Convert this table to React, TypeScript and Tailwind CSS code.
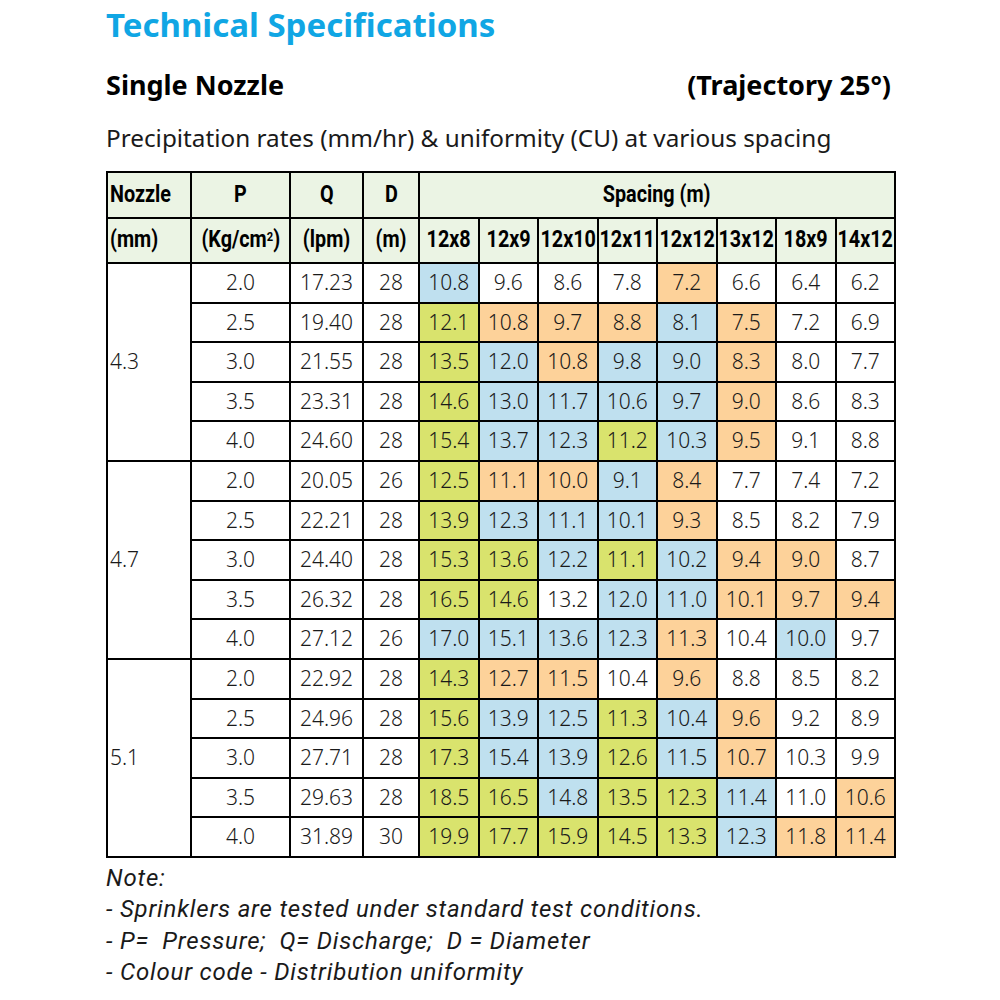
const B = "bg-[#bfe0ef]";
const G = "bg-[#d9e36d]";
const O = "bg-[#fdd29a]";
const W = "bg-white";

type Row = { p: string; q: string; d: string; v: [string, string][] };

const spacings = ["12x8", "12x9", "12x10", "12x11", "12x12", "13x12", "18x9", "14x12"];

const groups: { nozzle: string; rows: Row[] }[] = [
  {
    nozzle: "4.3",
    rows: [
      { p: "2.0", q: "17.23", d: "28", v: [["10.8", B], ["9.6", W], ["8.6", W], ["7.8", W], ["7.2", O], ["6.6", W], ["6.4", W], ["6.2", W]] },
      { p: "2.5", q: "19.40", d: "28", v: [["12.1", G], ["10.8", O], ["9.7", O], ["8.8", O], ["8.1", B], ["7.5", O], ["7.2", W], ["6.9", W]] },
      { p: "3.0", q: "21.55", d: "28", v: [["13.5", G], ["12.0", B], ["10.8", O], ["9.8", B], ["9.0", B], ["8.3", O], ["8.0", W], ["7.7", W]] },
      { p: "3.5", q: "23.31", d: "28", v: [["14.6", G], ["13.0", B], ["11.7", B], ["10.6", B], ["9.7", B], ["9.0", O], ["8.6", W], ["8.3", W]] },
      { p: "4.0", q: "24.60", d: "28", v: [["15.4", G], ["13.7", B], ["12.3", B], ["11.2", G], ["10.3", B], ["9.5", O], ["9.1", W], ["8.8", W]] },
    ],
  },
  {
    nozzle: "4.7",
    rows: [
      { p: "2.0", q: "20.05", d: "26", v: [["12.5", G], ["11.1", O], ["10.0", O], ["9.1", B], ["8.4", O], ["7.7", W], ["7.4", W], ["7.2", W]] },
      { p: "2.5", q: "22.21", d: "28", v: [["13.9", G], ["12.3", B], ["11.1", B], ["10.1", B], ["9.3", O], ["8.5", W], ["8.2", W], ["7.9", W]] },
      { p: "3.0", q: "24.40", d: "28", v: [["15.3", G], ["13.6", G], ["12.2", B], ["11.1", G], ["10.2", B], ["9.4", O], ["9.0", O], ["8.7", W]] },
      { p: "3.5", q: "26.32", d: "28", v: [["16.5", G], ["14.6", G], ["13.2", W], ["12.0", B], ["11.0", B], ["10.1", O], ["9.7", O], ["9.4", O]] },
      { p: "4.0", q: "27.12", d: "26", v: [["17.0", B], ["15.1", B], ["13.6", B], ["12.3", B], ["11.3", O], ["10.4", W], ["10.0", B], ["9.7", W]] },
    ],
  },
  {
    nozzle: "5.1",
    rows: [
      { p: "2.0", q: "22.92", d: "28", v: [["14.3", G], ["12.7", O], ["11.5", O], ["10.4", W], ["9.6", O], ["8.8", W], ["8.5", W], ["8.2", W]] },
      { p: "2.5", q: "24.96", d: "28", v: [["15.6", G], ["13.9", B], ["12.5", B], ["11.3", G], ["10.4", B], ["9.6", O], ["9.2", W], ["8.9", W]] },
      { p: "3.0", q: "27.71", d: "28", v: [["17.3", G], ["15.4", B], ["13.9", B], ["12.6", G], ["11.5", B], ["10.7", O], ["10.3", W], ["9.9", W]] },
      { p: "3.5", q: "29.63", d: "28", v: [["18.5", G], ["16.5", G], ["14.8", B], ["13.5", G], ["12.3", G], ["11.4", B], ["11.0", W], ["10.6", O]] },
      { p: "4.0", q: "31.89", d: "30", v: [["19.9", G], ["17.7", G], ["15.9", G], ["14.5", G], ["13.3", G], ["12.3", B], ["11.8", O], ["11.4", O]] },
    ],
  },
];

const head = "border-2 border-black bg-[#ebf4e4] font-bold text-[23px] text-black font-['Roboto',sans-serif] p-0";
const cell = "border-2 border-black text-center text-[21px] font-light text-[#1a1a1a] p-0";

// narrow bold label, squeezed horizontally to mimic a condensed face
function Narrow({ children, left }: { children: React.ReactNode; left?: boolean }) {
  return (
    <div className={`flex ${left ? "justify-start" : "justify-center"}`}>
      <span className={`shrink-0 scale-x-[0.86] whitespace-nowrap ${left ? "origin-left" : "origin-center"}`}>
        {children}
      </span>
    </div>
  );
}

export default function App() {
  return (
    <div className="h-[1000px] w-[1000px] bg-white pl-[106px] pt-[5px] text-black font-['Noto_Sans',sans-serif]">
      <h1 className="text-[33px] font-bold leading-[40px] text-[#10a6e4]">Technical Specifications</h1>
      <div className="mt-[22px] flex w-[788px] items-center justify-between text-[27px] font-bold leading-[36px]">
        <span>Single Nozzle</span>
        <span className="pr-[3px]">(Trajectory 25°)</span>
      </div>
      <p className="mt-[18px] text-[24.3px] leading-[34px] text-[#1a1a1a]">
        Precipitation rates (mm/hr) &amp; uniformity (CU) at various spacing
      </p>
      <table className="mt-[16px] w-[788px] table-fixed border-collapse border-2 border-black">
        <colgroup>
          <col className="w-[84px]" />
          <col className="w-[99px]" />
          <col className="w-[73px]" />
          <col className="w-[56px]" />
          {spacings.map((s) => (
            <col key={s} className="w-[59.5px]" />
          ))}
        </colgroup>
        <thead>
          <tr className="h-[46px]">
            <th className={`${head} pl-[2px]`}><Narrow left>Nozzle</Narrow></th>
            <th className={head}><Narrow>P</Narrow></th>
            <th className={head}><Narrow>Q</Narrow></th>
            <th className={head}><Narrow>D</Narrow></th>
            <th className={head} colSpan={8}><Narrow>Spacing (m)</Narrow></th>
          </tr>
          <tr className="h-[45px]">
            <th className={`${head} pl-[2px]`}><Narrow left>(mm)</Narrow></th>
            <th className={head}>
              <Narrow>
                (Kg/cm<sup className="text-[13px]">2</sup>)
              </Narrow>
            </th>
            <th className={head}><Narrow>(lpm)</Narrow></th>
            <th className={head}><Narrow>(m)</Narrow></th>
            {spacings.map((s) => (
              <th key={s} className={head}><Narrow>{s}</Narrow></th>
            ))}
          </tr>
        </thead>
        <tbody>
          {groups.map((g) =>
            g.rows.map((r, i) => (
              <tr key={g.nozzle + r.p} className="h-[39.6px]">
                {i === 0 && (
                  <td rowSpan={5} className={`${cell} pl-[2px] text-left`}>
                    {g.nozzle}
                  </td>
                )}
                <td className={cell}>{r.p}</td>
                <td className={cell}>{r.q}</td>
                <td className={cell}>{r.d}</td>
                {r.v.map(([val, bg], k) => (
                  <td key={k} className={`${cell} ${bg}`}>{val}</td>
                ))}
              </tr>
            ))
          )}
        </tbody>
      </table>
      <div className="mt-[5px] text-[24px] italic leading-[31.5px] tracking-[0.8px] text-[#1a1a1a] font-['Roboto',sans-serif]">
        <p>Note:</p>
        <p>- Sprinklers are tested under standard test conditions.</p>
        <p>- P=&nbsp; Pressure;&nbsp; Q= Discharge;&nbsp; D = Diameter</p>
        <p>- Colour code - Distribution uniformity</p>
      </div>
    </div>
  );
}
